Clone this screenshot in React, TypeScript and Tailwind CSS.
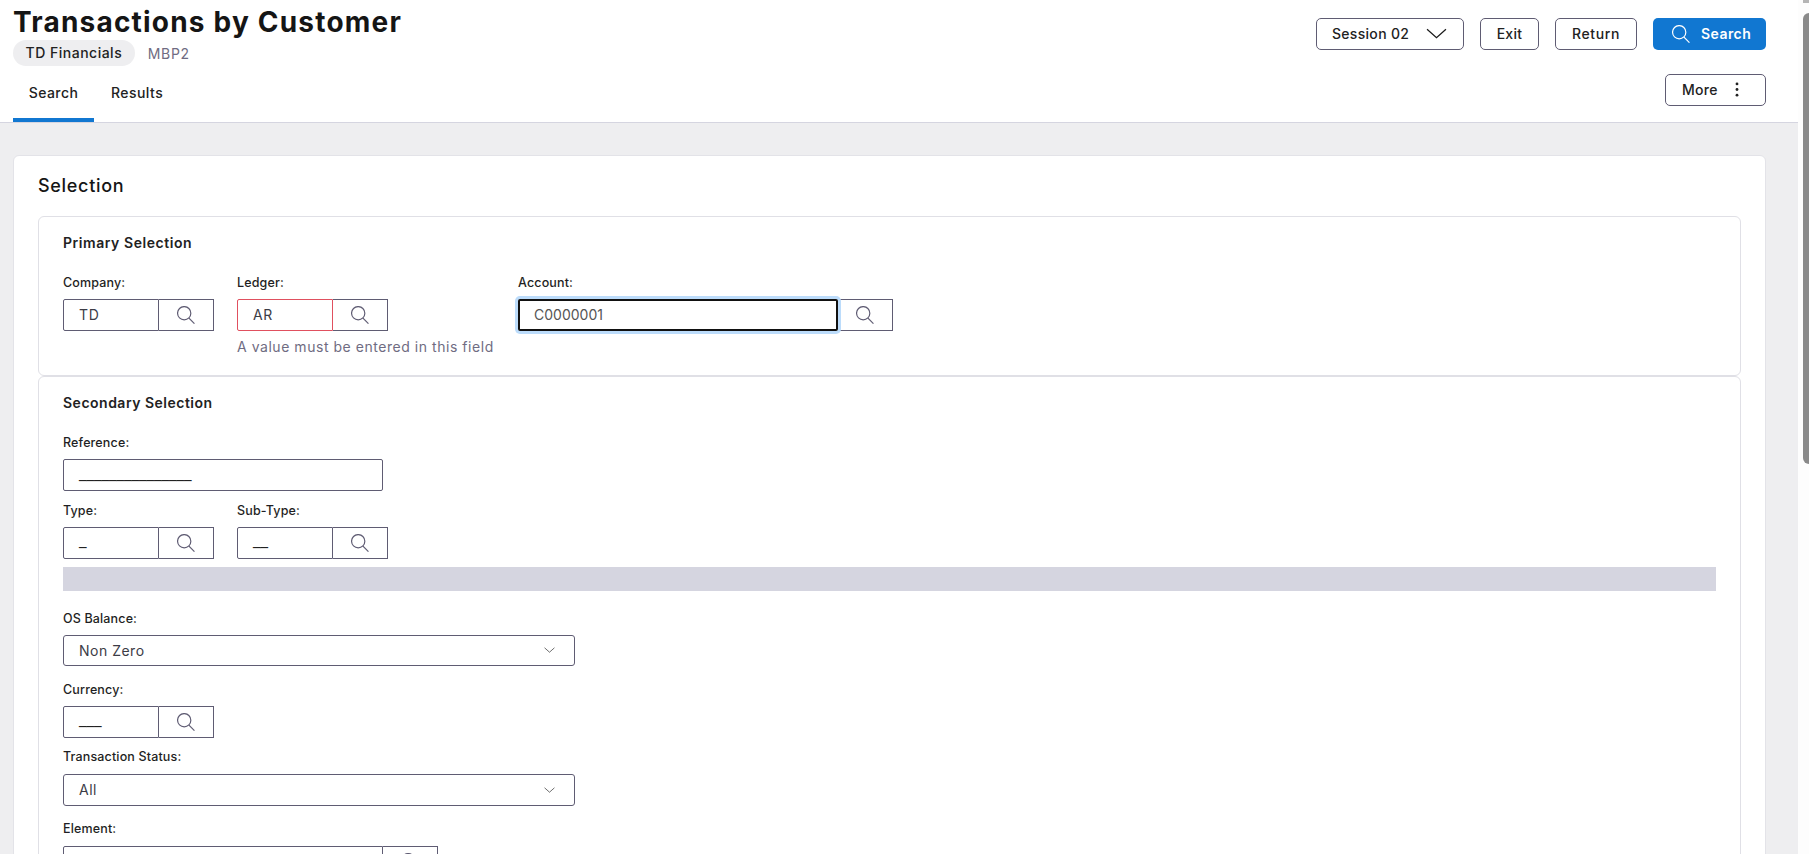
import React from "react";

const font = { fontFamily: "Inter" };

function Mag({ color = "#5f5c73" }: { color?: string }) {
  return (
    <svg viewBox="0 0 19 19" className="w-[18px] h-[18px]" fill="none" stroke={color} strokeWidth="1.25">
      <circle cx="7.6" cy="7.6" r="7" />
      <path d="M12.6 12.8 L18.4 18.6" />
    </svg>
  );
}

function Chevron({ className, color = "#1a1a1a" }: { className: string; color?: string }) {
  return (
    <svg viewBox="0 0 20 10" className={className} fill="none" stroke={color} strokeWidth="1.2">
      <path d="M1 1 L10 9 L19 1" />
    </svg>
  );
}

function Lookup({ value, invalid = false, blank = false }: { value: string; invalid?: boolean; blank?: boolean }) {
  return (
    <div className="flex h-[32px]">
      <div
        className={`w-[96px] h-full rounded-l-[2px] border pl-[15px] text-[#3c3c46] ${
          blank ? "font-['DejaVu_Sans'] text-[15px] leading-[23px] text-[#222]" : "text-[14px] leading-[30px] tracking-[0.6px]"
        } ${invalid ? "border-[#e0505f]" : "border-[#5f5c73]"}`}
      >
        {value}
      </div>
      <div className="w-[55px] h-full border border-l-0 border-[#5f5c73] flex items-center justify-center">
        <Mag />
      </div>
    </div>
  );
}

function Label({ children, className = "" }: { children: React.ReactNode; className?: string }) {
  return <div className={`text-[12.5px] tracking-[0.15px] leading-[16px] font-medium text-[#1f1f24] ${className}`}>{children}</div>;
}

function Select({ value, h }: { value: string; h: string }) {
  return (
    <div className={`${h} w-[512px] rounded-[3px] border border-[#5f5c73] flex items-center justify-between pl-[15px] pr-[19px] pb-[1px] text-[14px] tracking-[0.5px] text-[#3c3c46]`}>
      <span>{value}</span>
      <Chevron className="w-[11px] h-[6px]" color="#222222" />
    </div>
  );
}

export default function App() {
  return (
    <div className="flex h-screen w-full overflow-hidden bg-white" style={font}>
      <div className="flex-1 min-w-0 flex flex-col">
        <header className="h-[123px] shrink-0 border-b border-[#d5d5e0] bg-white flex justify-between pl-[13px] pr-[32px]">
          <div className="flex flex-col">
            <h1 className="mt-[5px] text-[28px] tracking-[1.2px] leading-[34px] font-bold text-[#151515]">Transactions by Customer</h1>
            <div className="flex items-center mt-[1px]">
              <span className="h-[26px] px-[12.5px] rounded-full bg-[#eeeef0] text-[14px] tracking-[0.5px] leading-[26px] font-medium text-[#222]">TD Financials</span>
              <span className="ml-[13px] text-[14px] tracking-[0.7px] text-[#6f6c82]">MBP2</span>
            </div>
            <nav className="flex mt-[13px] text-[14px] tracking-[0.45px] font-medium text-[#222]">
              <span className="h-[43px] w-[81px] border-b-[4px] border-[#1177d1] text-center leading-[28px]">Search</span>
              <span className="h-[43px] ml-[17px] leading-[28px]">Results</span>
            </nav>
          </div>
          <div className="flex flex-col items-end pt-[18px]">
            <div className="flex gap-[16px] text-[14px] tracking-[0.3px] font-medium text-[#222]">
              <button className="h-[32px] w-[148px] rounded-[5px] border border-[#5f5c73] flex items-center justify-between pl-[15px] pr-[16px] pb-[1px]">
                Session 02 <Chevron className="w-[21px] h-[11px]" />
              </button>
              <button className="h-[32px] w-[59px] rounded-[5px] border border-[#5f5c73] pb-[1px]">Exit</button>
              <button className="h-[32px] w-[82px] rounded-[5px] border border-[#5f5c73] pb-[1px] tracking-[0.6px]">Return</button>
              <button className="h-[32px] w-[113px] rounded-[5px] bg-[#1177d1] text-white font-semibold tracking-[0.45px] flex items-center gap-[11px] pl-[19px] pb-[1px]">
                <Mag color="#ffffff" /> Search
              </button>
            </div>
            <button className="mt-[24px] h-[32px] w-[101px] rounded-[5px] border border-[#5f5c73] flex items-center justify-between pl-[16px] pr-[26px] pb-[1px] text-[14px] tracking-[0.3px] font-medium text-[#222]">
              More
              <svg viewBox="0 0 4 16" className="w-[4px] h-[15px]" fill="#222">
                <circle cx="2" cy="2" r="1.5" />
                <circle cx="2" cy="8" r="1.5" />
                <circle cx="2" cy="14" r="1.5" />
              </svg>
            </button>
          </div>
        </header>
        <main className="flex-1 min-h-0 bg-[#eeeef0] pt-[32px] pl-[13px] pr-[32px]">
          <section className="bg-white border border-[#e3e3e8] rounded-[6px] pt-[18px] px-[24px] h-[760px]">
            <h2 className="text-[18px] tracking-[0.7px] leading-[24px] font-medium text-[#151515]">Selection</h2>
            <div className="mt-[18px] border border-[#e0e0e6] rounded-[6px] h-[160px] px-[24px] pt-[16px]">
              <h3 className="text-[14px] tracking-[0.55px] leading-[20px] font-semibold text-[#222]">Primary Selection</h3>
              <div className="flex mt-[22px]">
                <div className="w-[174px]">
                  <Label>Company:</Label>
                  <div className="mt-[8px]"><Lookup value="TD" /></div>
                </div>
                <div className="w-[281px]">
                  <Label>Ledger:</Label>
                  <div className="mt-[8px]"><Lookup value="AR" invalid /></div>
                  <div className="mt-[7px] text-[14px] tracking-[0.54px] leading-[18px] whitespace-nowrap text-[#6f6c82]">A value must be entered in this field</div>
                </div>
                <div>
                  <Label>Account:</Label>
                  <div className="mt-[8px] flex h-[32px]">
                    <div className="w-[320px] h-full rounded-[2px] border-2 border-[#111] ring-[3px] ring-[#bcdcfb] pl-[14px] text-[14px] leading-[28px] text-[#555] relative z-10">C0000001</div>
                    <div className="w-[55px] h-full border border-l-0 border-[#5f5c73] flex items-center justify-center"><Mag /></div>
                  </div>
                </div>
              </div>
            </div>
            <div className="border border-[#e0e0e6] rounded-[6px] h-[600px] px-[24px] pt-[16px]">
              <h3 className="text-[14px] tracking-[0.5px] leading-[20px] font-semibold text-[#222]">Secondary Selection</h3>
              <Label className="mt-[22px]">Reference:</Label>
              <div className="mt-[8px] w-[320px] h-[32px] rounded-[2px] border border-[#5f5c73] pl-[15px] font-['DejaVu_Sans'] text-[15px] leading-[24px] text-[#222]">_______________</div>
              <div className="flex mt-[12px]">
                <div className="w-[174px]">
                  <Label>Type:</Label>
                  <div className="mt-[8px]"><Lookup value="_" blank /></div>
                </div>
                <div>
                  <Label>Sub-Type:</Label>
                  <div className="mt-[8px]"><Lookup value="__" blank /></div>
                </div>
              </div>
              <div className="mt-[8px] h-[24px] bg-[#d5d5e0]" />
              <Label className="mt-[20px]">OS Balance:</Label>
              <div className="mt-[8px]"><Select value="Non Zero" h="h-[31px]" /></div>
              <Label className="mt-[16px]">Currency:</Label>
              <div className="mt-[8px]"><Lookup value="___" blank /></div>
              <Label className="mt-[11px]">Transaction Status:</Label>
              <div className="mt-[9px]"><Select value="All" h="h-[32px]" /></div>
              <Label className="mt-[15px]">Element:</Label>
              <div className="mt-[9px] flex h-[32px]">
                <div className="w-[320px] h-full rounded-l-[2px] border border-[#5f5c73]" />
                <div className="w-[55px] h-full border border-l-0 border-[#5f5c73] flex items-center justify-center"><Mag /></div>
              </div>
            </div>
          </section>
        </main>
      </div>
      <div className="w-[11px] shrink-0 bg-[#fdfdfd] pl-[5px]">
        <div className="h-[3px] bg-[#b5b5b5]" />
        <div className="mt-[10px] h-[451px] rounded-l-[6px] bg-[#8a8a8a]" />
      </div>
    </div>
  );
}
